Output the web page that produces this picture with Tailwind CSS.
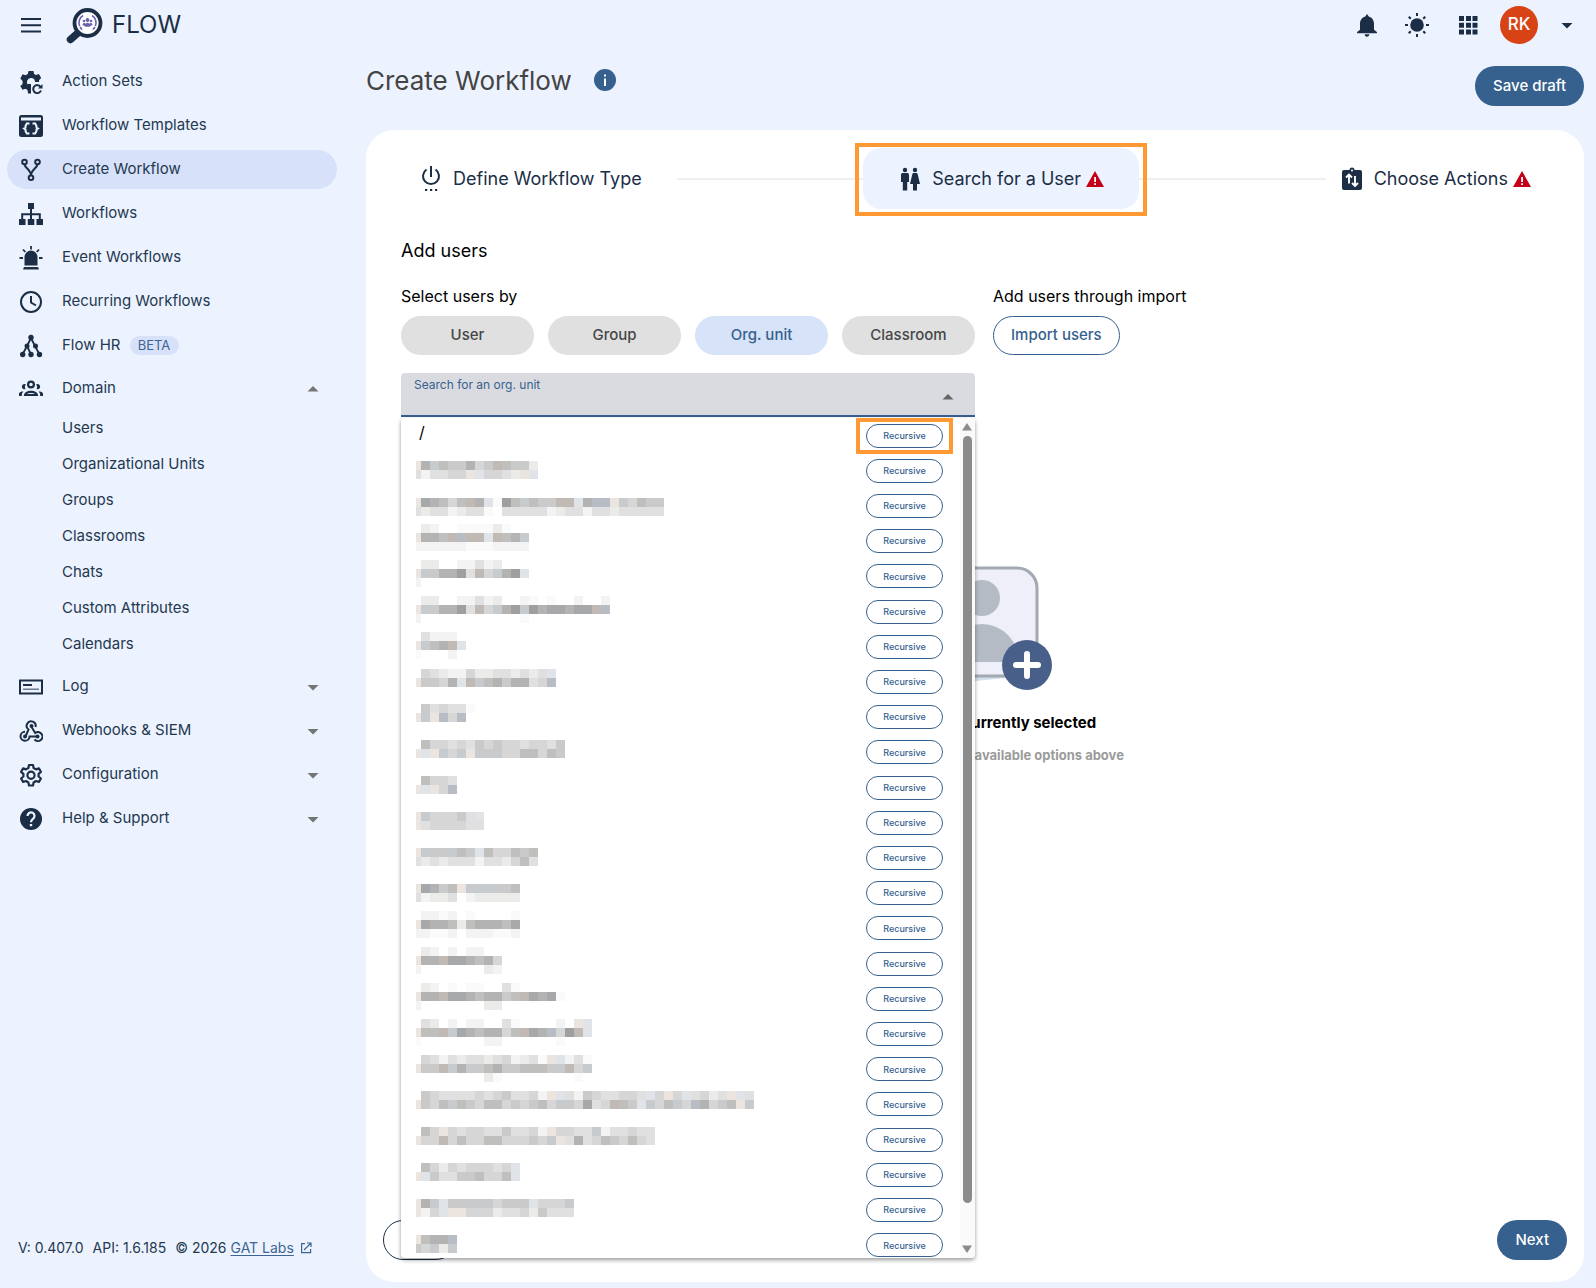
<!DOCTYPE html>
<html lang="en">
  <head>
    <meta charset="UTF-8" />
    <meta name="viewport" content="width=device-width, initial-scale=1.0" />
    <title>Flow - Create Workflow</title>
    <script src="https://cdn.jsdelivr.net/npm/@tailwindcss/browser@4"></script>
  </head>
  <body class="flex min-h-screen flex-col bg-[#ecf3ff] font-['Inter',sans-serif] text-[#1b2e45]">
    <header class="flex h-[50px] items-center pr-[18px] pl-[19px]">
      <button aria-label="Menu">
        <svg class="size-6" viewBox="0 0 24 24" fill="currentColor"><path d="M2 5h20v2H2zM2 11.200h20v2H2zM2 17.500h20v2H2z" /></svg>
      </button>
      <a href="#" class="ml-[22px] flex items-center gap-2">
        <svg class="h-[38px] w-[39px]" viewBox="0 0 39 38">
          <path d="M5.500 33.500 14 26" stroke="#1b2e45" stroke-width="7.500" stroke-linecap="round" />
          <circle cx="22.500" cy="17" r="13" fill="#fff" stroke="#1b2e45" stroke-width="3.800" />
          <g fill="none" stroke="#6a62ad" stroke-width="1.600">
            <path d="M18 9.500a8.500 8.500 0 0 0 0 14.500M27 9.500a8.500 8.500 0 0 1 0 14.500" stroke-dasharray="12 1 3 1" />
          </g>
          <g fill="#6a62ad">
            <circle cx="22.500" cy="14" r="1.900" /><circle cx="19" cy="15" r="1.300" /><circle cx="26" cy="15" r="1.300" />
            <path d="M17.500 19c0-2 2.500-2.500 3.200-1.300 1-1.200 2.600-1.200 3.600 0 .7-1.200 3.200-.7 3.200 1.300l-1.700.8-1.300 1h-4L19 19.800z" />
          </g>
        </svg>
        <span class="text-2xl">FLOW</span>
      </a>
      <div class="ml-auto flex items-center">
        <button aria-label="Notifications">
          <svg class="size-[28px]" viewBox="0 0 24 24" fill="currentColor"><path d="M12 22c1.100 0 2-.9 2-2h-4c0 1.100.9 2 2 2zm6-6v-5c0-3.100-1.600-5.600-4.500-6.300L12 2.500l-1.500 2.200C7.600 5.400 6 7.900 6 11v5l-2.500 2v1h17v-1z" /></svg>
        </button>
        <button class="ml-[23px]" aria-label="Theme">
          <svg class="size-[26px]" viewBox="0 0 26 26" fill="currentColor">
            <circle cx="13" cy="13" r="6.800" />
            <path d="M12 1h2v3h-2zM12 22h2v3h-2zM1 12h3v2H1zM22 12h3v2h-3z" />
            <path d="m4 5.500 1.500-1.500 2 2L6 7.500zM18.500 6l2-2L22 5.500l-2 2zM4 20.500l2-2L7.500 20l-2 2zM18.500 20l1.500-1.500 2 2-1.500 1.500z" />
          </svg>
        </button>
        <button class="ml-[28px]" aria-label="Apps">
          <svg class="size-[20px]" viewBox="0 0 20 20" fill="currentColor"><path d="M1 1h5v5H1zM8 1h5v5H8zM14.500 1h5v5h-5zM1 7.800h5v5H1zM8 7.800h5v5H8zM14.500 7.800h5v5h-5zM1 14.500h5v5H1zM8 14.500h5v5H8zM14.500 14.500h5v5h-5z" /></svg>
        </button>
        <button class="ml-[22px] flex items-center" aria-label="Account">
          <span class="flex size-[38px] items-center justify-center rounded-full bg-[#d84315] text-[17px] font-medium text-white">RK</span>
          <svg class="ml-[18px] size-[22px]" viewBox="0 0 22 22" fill="currentColor"><path d="M5.500 9h11L11 14.500z" /></svg>
        </button>
      </div>
    </header>

    <div class="flex flex-1">
      <aside class="flex w-[366px] shrink-0 flex-col">
        <nav class="flex flex-col gap-[5px] pt-3 pr-[29px] pl-[7px] text-[15px] text-[#24384f]">
          <a href="#" class="flex h-[39px] items-center gap-[19px] pl-[12px]">
            <svg class="size-6" viewBox="0 0 24 24" fill="#1b2e45">
              <path fill-rule="evenodd" d="M9.500 1h5l.6 3 1.800 1 3-1 2.300 4-2.200 2.200.2 1.800h-4.200a4 4 0 1 0-6 3.400V23h-1l-.5-3-2-1.200-3 1L1.300 16l2.300-2v-3L1.300 8.500l2.300-4.300 3 1L8.800 4z" />
              <path d="M21.500 16.800A4 4 0 1 0 22 20.500" fill="none" stroke="#1b2e45" stroke-width="2" />
              <path d="M23.500 14v4.500H19zM9 14h3v9.500H9z" />
            </svg>
            Action Sets
          </a>
          <a href="#" class="flex h-[39px] items-center gap-[19px] pl-[12px]">
            <svg class="size-6" viewBox="0 0 24 24">
              <rect x="0" y="1" width="24" height="22" rx="2.500" fill="#1b2e45" />
              <path d="M2 3.500h20v3H2z" fill="#ecf3ff" />
              <path d="M10.500 9.500H7.800L6.500 12v1.500L5 14.500l1.500 1V17l1.300 2.500h2.700M13.500 9.500h2.700l1.300 2.500v1.500l1.500 1-1.500 1V17l-1.300 2.500h-2.700" fill="none" stroke="#ecf3ff" stroke-width="2" />
            </svg>
            Workflow Templates
          </a>
          <a href="#" class="flex h-[39px] items-center gap-[19px] rounded-full bg-[#d7e2fa] pl-[12px]">
            <svg class="size-6" viewBox="0 0 24 24" fill="none" stroke="#1b2e45" stroke-width="2">
              <circle cx="5.500" cy="4" r="2.300" /><circle cx="18.500" cy="4" r="2.300" /><circle cx="12" cy="19.800" r="2.300" />
              <path d="M5.500 6.500C6 10 12 12 12 17.500M18.500 6.500C18 10 12 12 12 17.500" />
            </svg>
            Create Workflow
          </a>
          <a href="#" class="flex h-[39px] items-center gap-[19px] pl-[12px]">
            <svg class="size-6" viewBox="0 0 24 24" fill="#1b2e45">
              <path d="M9 1h6v6H9zM0 17h6.500v6H0zM8.800 17h6.500v6H8.800zM17.500 17H24v6h-6.500z" />
              <path d="M12 6v12M3.200 18v-5.800h17.600V18" fill="none" stroke="#1b2e45" stroke-width="2" />
            </svg>
            Workflows
          </a>
          <a href="#" class="flex h-[39px] items-center gap-[19px] pl-[12px]">
            <svg class="size-6" viewBox="0 0 24 24" fill="#1b2e45">
              <path d="M5.500 19.500V11a6.500 6.500 0 0 1 13 0v8.500zM5 21h14l1 2.500H4z" />
              <path d="M12 0v3.500M.5 12h3.500M20 12h3.500M4 3.500 6.300 6M20 3.500 17.700 6" stroke="#1b2e45" stroke-width="1.800" />
            </svg>
            Event Workflows
          </a>
          <a href="#" class="flex h-[39px] items-center gap-[19px] pl-[12px]">
            <svg class="size-6" viewBox="0 0 24 24" fill="none" stroke="#1b2e45" stroke-width="2">
              <circle cx="12" cy="12" r="10" /><path d="M12 6v6.500l5 3" />
            </svg>
            Recurring Workflows
          </a>
          <a href="#" class="flex h-[39px] items-center gap-[19px] pl-[12px]">
            <svg class="size-6" viewBox="0 0 24 24" fill="#1b2e45">
              <path d="M12 4 8 12 3.500 20.500M12 4l4 8 4.500 8.500M8 12l4 8.500" fill="none" stroke="#1b2e45" stroke-width="1.800" />
              <circle cx="12" cy="3.500" r="2.700" /><circle cx="8" cy="12" r="2.500" /><circle cx="16.500" cy="12" r="2.500" />
              <circle cx="3.700" cy="20.500" r="2.700" /><circle cx="12" cy="20.500" r="2.700" /><circle cx="20.500" cy="20.500" r="2.700" />
            </svg>
            <span class="flex items-center gap-[9px]">Flow HR
              <span class="flex h-[19px] w-[49px] items-center justify-center rounded-full bg-[#d7e2fa] text-[13px] text-[#3e6592]">BETA</span>
            </span>
          </a>
          <div>
            <button class="flex h-9 w-full items-center gap-[19px] pr-[13px] pl-[12px]">
              <svg class="size-6" viewBox="0 0 24 24" fill="#1b2e45">
                <path fill-rule="evenodd" d="M12 4.500a4 4 0 1 1 0 8 4 4 0 0 1 0-8zm0 2.200a1.800 1.800 0 1 0 0 3.600 1.800 1.800 0 0 0 0-3.600zM4.800 20c0-7 14.400-7 14.400 0zm3-2h8.400c-1.500-1.500-7-1.500-8.400 0z" />
                <path d="M7 8.500A2.600 2.600 0 1 0 6.500 13c-1-1.500-.8-3 .5-4.500zM17 8.500a2.600 2.600 0 1 1 .5 4.500c1-1.500.8-3-.5-4.500zM-.5 20c0-3 1.200-4.500 5-4.500-1.500 1.500-1.700 2.500-1.700 4.500zM24.500 20c0-3-1.200-4.500-5-4.500 1.500 1.500 1.700 2.500 1.700 4.500z" />
              </svg>
              Domain
              <svg class="ml-auto size-[22px]" viewBox="0 0 22 22" fill="#757575"><path d="M5.500 14.500h11L11 9z" /></svg>
            </button>
            <div class="flex flex-col pt-1 pl-[55px]">
              <a href="#" class="flex h-9 items-center">Users</a>
              <a href="#" class="flex h-9 items-center">Organizational Units</a>
              <a href="#" class="flex h-9 items-center">Groups</a>
              <a href="#" class="flex h-9 items-center">Classrooms</a>
              <a href="#" class="flex h-9 items-center">Chats</a>
              <a href="#" class="flex h-9 items-center">Custom Attributes</a>
              <a href="#" class="flex h-9 items-center">Calendars</a>
            </div>
          </div>
          <button class="flex h-[39px] items-center gap-[19px] pr-[13px] pl-[12px]">
            <svg class="size-6" viewBox="0 0 24 24">
              <path d="M1 5.500h22v13H1z" fill="none" stroke="#1b2e45" stroke-width="2" />
              <path d="M4 9h9v2H4z" fill="#1b2e45" /><path d="M4 13.500h16v1.500H4z" fill="#66788f" />
            </svg>
            Log
            <svg class="ml-auto size-[22px]" viewBox="0 0 22 22" fill="#757575"><path d="M5.500 9h11L11 14.500z" /></svg>
          </button>
          <button class="flex h-[39px] items-center gap-[19px] pr-[13px] pl-[12px]">
            <svg class="size-6" viewBox="0 0 24 24" fill="none" stroke="#1b2e45" stroke-width="2">
              <path d="M16.500 8A4.500 4.500 0 1 0 9.500 10.500L6.500 17.500M12 7l4.200 7a4.500 4.500 0 1 1-.7 6.500M6 12.800a4.500 4.500 0 1 0 4.500 4.700H18" />
              <g fill="#1b2e45" stroke="none"><circle cx="12.500" cy="7" r="2" /><circle cx="6" cy="17.500" r="2" /><circle cx="18.500" cy="17.500" r="2" /></g>
            </svg>
            Webhooks &amp; SIEM
            <svg class="ml-auto size-[22px]" viewBox="0 0 22 22" fill="#757575"><path d="M5.500 9h11L11 14.500z" /></svg>
          </button>
          <button class="flex h-[39px] items-center gap-[19px] pr-[13px] pl-[12px]">
            <svg class="size-6" viewBox="0 0 24 24" fill="none" stroke="#1b2e45" stroke-width="2.200">
              <path d="M10 2h4l.6 3 2.400 1.400 2.900-1 2 3.500-2.300 2v2.600l2.300 2-2 3.500-2.900-1L14.600 19.500 14 22.500h-4l-.6-3L7 18l-2.900 1-2-3.500 2.300-2v-2.600l-2.300-2 2-3.500 2.900 1L9.400 5z" stroke-linejoin="round" />
              <circle cx="12" cy="12.200" r="3.600" />
            </svg>
            Configuration
            <svg class="ml-auto size-[22px]" viewBox="0 0 22 22" fill="#757575"><path d="M5.500 9h11L11 14.500z" /></svg>
          </button>
          <button class="flex h-[39px] items-center gap-[19px] pr-[13px] pl-[12px]">
            <svg class="size-6" viewBox="0 0 24 24">
              <circle cx="12" cy="12" r="11" fill="#1b2e45" />
              <path d="M8.500 9a3.500 3.500 0 1 1 5.500 2.800c-1.300 1-2 1.500-2 3.400" fill="none" stroke="#ecf3ff" stroke-width="2.200" />
              <path d="M10.800 17h2.400v2.300h-2.400z" fill="#ecf3ff" />
            </svg>
            Help &amp; Support
            <svg class="ml-auto size-[22px]" viewBox="0 0 22 22" fill="#757575"><path d="M5.500 9h11L11 14.500z" /></svg>
          </button>
        </nav>
        <footer class="mt-auto mb-[30px] flex h-5 items-center gap-[9px] pl-[18px] text-sm text-[#24384f]">
          <span>V: 0.407.0</span>
          <span>API: 1.6.185</span>
          <span class="flex items-center gap-1">© 2026
            <a href="#" class="flex items-center gap-[6px] text-[#3e6592]"><span class="underline underline-offset-2">GAT Labs</span>
              <svg class="size-3" viewBox="0 0 12 12" fill="none" stroke="currentColor" stroke-width="1.200"><path d="M5 1.600H1.600v9h9V7M7 1h4v4M11 1 4 8" /></svg>
            </a>
          </span>
        </footer>
      </aside>

      <main class="flex min-w-0 flex-1 flex-col pr-3 pb-[6px]">
        <div class="flex h-20 items-start justify-between">
          <div class="flex h-[60px] items-center gap-[22px]">
            <h1 class="text-[26px] text-[#444]">Create Workflow</h1>
            <button aria-label="About workflows">
              <svg class="size-[22px]" viewBox="0 0 22 22"><circle cx="11" cy="11" r="11" fill="#36618e" /><path d="M10 9.500h2V17h-2zM10 5.500h2v2h-2z" fill="#fff" /></svg>
            </button>
          </div>
          <button class="mt-4 h-10 rounded-full bg-[#36618e] px-[18px] text-[15px] font-medium text-white">Save draft</button>
        </div>

        <section class="flex flex-1 flex-col rounded-[28px] bg-white pt-[18px] pb-[22px]">
          <div class="flex items-center px-[18px] text-lg">
            <button class="flex h-[61px] items-center gap-[10px] px-[35px]">
              <svg class="h-7 w-6" viewBox="0 0 24 28" fill="none" stroke="#1b2e45" stroke-width="2">
                <path d="M12 1v11M7.500 4.500a8 8 0 1 0 9 0" /><path d="M6 25h2.200M11 25h2.200M16 25h2.200" />
              </svg>
              Define Workflow Type
            </button>
            <div class="h-0.5 flex-1 bg-[#efefef]"></div>
            <button class="relative flex h-[61px] items-center gap-[10px] rounded-[18px] bg-[#ecf3ff] px-[35px]">
              <svg class="size-6" viewBox="0 0 24 24" fill="#1b2e45">
                <circle cx="7" cy="3" r="2.200" /><circle cx="17" cy="3" r="2.200" />
                <path d="M3 8c0-1.500.8-2 2-2h4c1.200 0 2 .5 2 2v7H9.200v8.500H4.800V15H3zM15.800 6h2.400c.8 0 1.200.4 1.500 1.200L22 17h-3v6.500h-4V17h-3l2.300-9.800c.3-.8.700-1.200 1.500-1.200z" />
              </svg>
              <span class="flex items-center gap-[5px]">Search for a User
                <svg class="size-[18px]" viewBox="0 0 18 18"><path d="M9 1l9 16H0z" fill="#c40018" /><path d="M8.200 7h1.800v5H8.200zM8.200 13.200h1.800V15H8.200z" fill="#fff" /></svg>
              </span>
              <span class="absolute -inset-x-2 -top-[5px] -bottom-[7px] border-4 border-[#ff9933]"></span>
            </button>
            <div class="h-0.5 flex-1 bg-[#efefef]"></div>
            <button class="flex h-[61px] items-center gap-[10px] pr-[35px] pl-[14px]">
              <svg class="size-6" viewBox="0 0 24 24">
                <path d="M4 3h5.500a2.500 2.500 0 0 1 5 0H20a2 2 0 0 1 2 2v16a2 2 0 0 1-2 2H4a2 2 0 0 1-2-2V5a2 2 0 0 1 2-2z" fill="#1b2e45" />
                <circle cx="12" cy="3.500" r="1" fill="#fff" />
                <path d="M9 16.500V8M6 10.500l3-3 3 3M15 9v9.500M12 16l3 3 3-3" fill="none" stroke="#fff" stroke-width="1.900" />
              </svg>
              <span class="flex items-center gap-[5px]">Choose Actions
                <svg class="size-[18px]" viewBox="0 0 18 18"><path d="M9 1l9 16H0z" fill="#c40018" /><path d="M8.200 7h1.800v5H8.200zM8.200 13.200h1.800V15H8.200z" fill="#fff" /></svg>
              </span>
            </button>
          </div>

          <div class="px-[35px] text-black">
            <h2 class="mt-[30px] text-lg leading-6">Add users</h2>
            <div class="mt-[23px] grid grid-cols-2">
              <div>
                <p class="text-base leading-5">Select users by</p>
                <div class="mt-[10px] grid grid-cols-4 gap-[14px] text-[15px] font-medium text-[#474747]">
                  <button class="h-[39px] rounded-full bg-[#e0e0e0]">User</button>
                  <button class="h-[39px] rounded-full bg-[#e0e0e0]">Group</button>
                  <button class="h-[39px] rounded-full bg-[#d7e3f8] text-[#36618e]">Org. unit</button>
                  <button class="h-[39px] rounded-full bg-[#e0e0e0]">Classroom</button>
                </div>
                <div class="relative mt-[18px] h-11 rounded-t border-b-2 border-[#36618e] bg-[#dadbe0]">
                  <label for="org-unit" class="block px-[13px] pt-1 text-xs leading-4 text-[#36618e]">Search for an org. unit</label>
                  <div class="flex h-5 items-start pr-4 pl-[13px]">
                    <input id="org-unit" type="text" class="h-5 min-w-0 flex-1 outline-none" />
                    <svg class="-mt-2 size-[22px]" viewBox="0 0 22 22" fill="#666"><path d="M5.500 14.500h11L11 9z" /></svg>
                  </div>

                  <div class="absolute inset-x-0 top-[45px] z-10 flex h-[840px] overflow-hidden rounded bg-white shadow-[0_2px_4px_rgba(0,0,0,0.4)]">
                    <ul id="units" class="flex h-[845px] flex-1 flex-col pr-[17px] pl-[15px]"></ul>
                    <div class="flex w-[15px] flex-col items-center bg-[#fafafa] py-[5px] pr-px">
                      <svg class="h-2 w-[10px]" viewBox="0 0 10 8" fill="#8b8b8b"><path d="M5 0l5 7.500H0z" /></svg>
                      <div class="mt-[5px] h-[767px] w-[9px] rounded-full bg-[#8b8b8b]"></div>
                      <svg class="mt-auto h-2 w-[10px]" viewBox="0 0 10 8" fill="#8b8b8b"><path d="M5 8l5-7.500H0z" /></svg>
                    </div>
                  </div>
                </div>
              </div>
              <div class="pl-[18px]">
                <p class="text-base leading-5">Add users through import</p>
                <button class="mt-[10px] h-[39px] rounded-full border border-[#36618e] px-[17px] text-[15px] font-medium text-[#36618e]">Import users</button>
              </div>
            </div>
          </div>

          <div class="mt-[143px] flex flex-col items-center text-center font-bold">
            <svg class="h-[140px] w-40" viewBox="0 0 160 140">
              <path d="M30 112h100v4l-60 6H34z" fill="#d3deef" />
              <rect x="30" y="8" width="112" height="108" rx="20" fill="#efeffa" stroke="#a2a9b0" stroke-width="3" />
              <path d="M50 102a37 38 0 0 1 74 0z" fill="#b5bbc4" />
              <circle cx="87" cy="38" r="18" fill="#b5bbc4" />
              <circle cx="132" cy="105" r="25" fill="#486089" />
              <path d="M132 94v22M121 105h22" stroke="#fff" stroke-width="6" stroke-linecap="round" />
            </svg>
            <p class="mt-[13px] text-[15px] leading-5 text-black">No users were currently selected</p>
            <p class="mt-3 text-[13px] leading-5 text-[#9b9b9b]">Add users by using the available options above</p>
          </div>

          <div class="mt-auto flex justify-between px-[17px] text-[15px] font-medium">
            <button class="h-10 rounded-full border border-[#1b2e45] px-[18px]">Back</button>
            <button class="h-10 rounded-full bg-[#36618e] px-[18px] text-white">Next</button>
          </div>
        </section>
      </main>
    </div>

    <script>
      // tones of the pixelated unit names
      const tones = {
        a: "#fafafa", b: "#f3f3f3", c: "#ebebea", d: "#e0e0e0", e: "#d6d6d6",
        f: "#cacaca", g: "#bfbfbe", h: "#b3b3b3", i: "#a7a8aa", j: "#9f9f9f",
        k: "#c8cbce", w: "#ebe4df", x: "#c1b9b3", y: "#e0e4e9", z: "#b8bcc5",
      };
      // [top of the first band, bands...], one letter per cell
      const units = [
        null,
        [43, "whkgffhefxgffc", "dbddeewyeedcwy"],
        [79, "wihgegxhyajgkgffxxyhzzwkegff", "dcddbcdda.dddddbcddbddcddddd"],
        [106, ".cb..aaaaca..", "whhgxzxxyxghk", "bbbbbbaaabbbb"],
        [142, ".cc..bbdbc...", "wkfhhjdxekhjy", "b"],
        [178, ".cc..bbdbc..ba.a..b..b", "wkfhhjdxekhjkjhiihiixz", "b...........a"],
        [214, ".dbbb.", "wkghxy", "a...b."],
        [250, ".edcbbeccddcdcdy", "wffehyxkghfhhdez"],
        [286, ".fdedda", "wkwzez"],
        [322, ".geededfefeedeedf", "wywkekwkfkeeggegf"],
        [358, ".geed", "wywez"],
        [394, "wkeeekdy", "wdeeeedd"],
        [430, "wkffkgfygeegfg", "dcdcdddbddcegd"],
        [466, "wihkgwkkkkfg", "dbccd.bccccc"],
        [493, ".bbab.a....a", "wihhgcghhhgi", "bbaab.bbbaab"],
        [529, ".cb.b.bb..", "whhxiihghe", "b.......cb"],
        [565, ".cb.a.aa..da", "whhxiihghhfgxihia", "b.......cc"],
        [601, ".dc.b.bb..da....b.wy", "wggxkihghhegxihzejxy", "a.......bb......a"],
        [637, ".edbdcddcdebcdawybda", "wffxkhkfghffgggfkxek", "........ca........a"],
        [673, ".feddddedefddebwydbfeddeedyeweydecdwyd", "wfegkgfeggefefgekfeidexgfykegkezhefgwk"],
        [709, ".gewedeeddfddebweeddkbddedd", "weexegeeggeeefekwdhdegfeged"],
        [745, ".gecedeeedey", "wyfddffgeegy"],
        [781, "whkyffkkkefffyeeek", "wbeywweeecddecfddd"],
        [817, "wghhz", "fekck"],
      ];
      const list = document.getElementById("units");
      const step = 845 / units.length;

      const mosaic = (unit, index) => {
        const [top, ...bands] = unit;
        const offset = top - Math.round(step * index);
        let cells = "";
        bands.forEach((band, row) => {
          [...band].forEach((tone, col) => {
            if (tone === ".") return;
            const x = col === 0 ? 0 : 5 + (col - 1) * 9;
            const width = col === 0 ? 5 : 9;
            cells += `<rect x="${x}" y="${offset + row * 9}" width="${width}" height="9" fill="${tones[tone]}" />`;
          });
        });
        return `<svg class="h-[35px] w-[400px] overflow-visible" shape-rendering="crispEdges" role="img" aria-label="Hidden name">${cells}</svg>`;
      };

      units.forEach((unit, index) => {
        const item = document.createElement("li");
        item.className = "flex flex-1 min-h-0 items-center justify-between";
        const name = unit ? mosaic(unit, index) : '<span class="mb-2 pl-[3px] text-base leading-5">/</span>';
        const frame = unit ? "" : '<span class="absolute -inset-x-[11px] -inset-y-[7px] border-4 border-[#ff9933]"></span>';
        item.innerHTML = `${name}<button class="relative h-6 w-[77px] rounded-full border border-[#36618e] text-[9px] font-medium text-[#36618e]">Recursive${frame}</button>`;
        list.appendChild(item);
      });
    </script>
  </body>
</html>
